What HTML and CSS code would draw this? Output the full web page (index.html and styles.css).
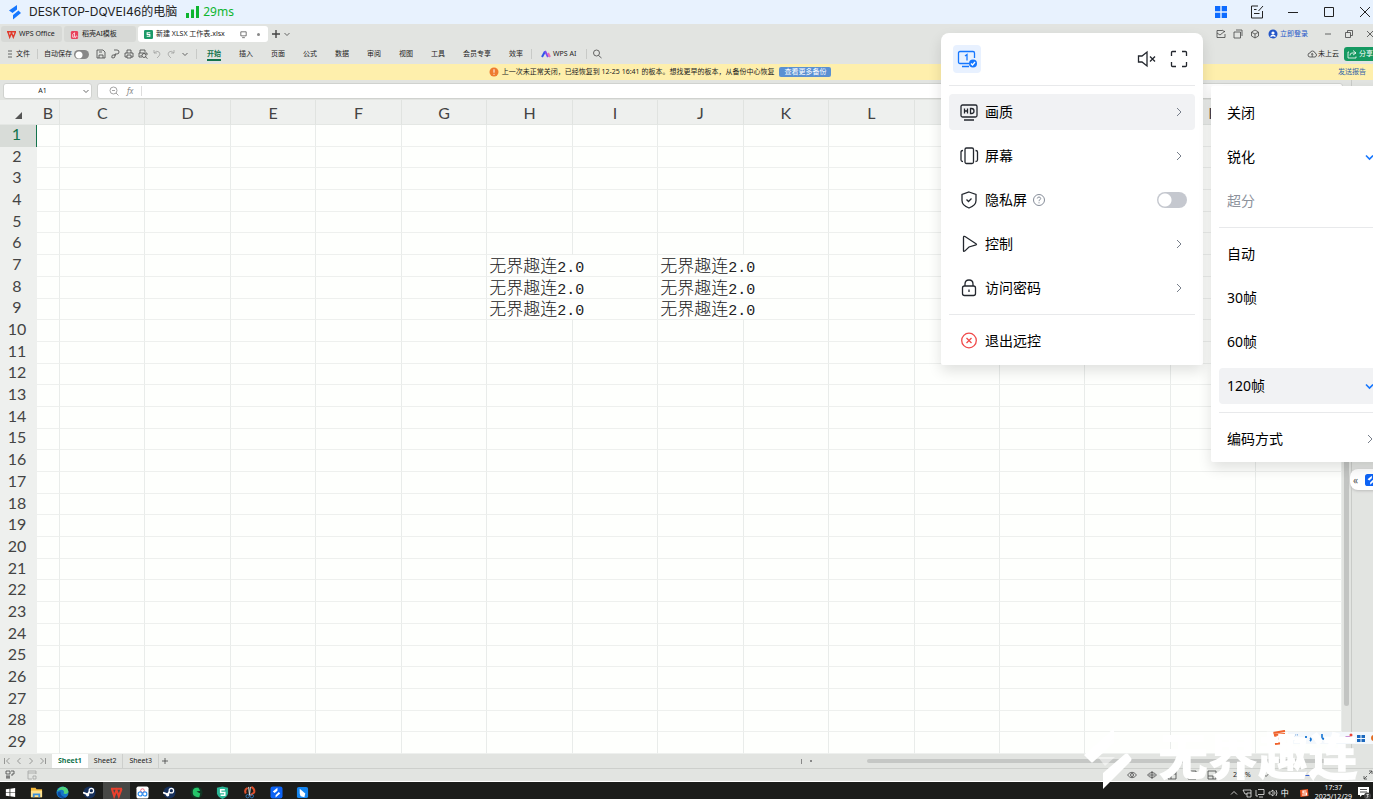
FILE: index.html
```html
<!DOCTYPE html>
<html lang="zh-CN">
<head>
    <meta charset="UTF-8">
    <meta name="viewport" content="width=device-width, initial-scale=1.0">
    <title>DESKTOP-DQVEI46的电脑</title>
    <link rel="stylesheet" href="styles.css">
</head>
<body>
    <svg class="defs">
        <symbol id="right" viewBox="0 0 10 10"><path d="M3 1l4 4-4 4"/></symbol>
        <symbol id="down" viewBox="0 0 10 10"><path d="M2.500 4l2.500 2.500L7.500 4"/></symbol>
        <symbol id="bolt" viewBox="0 0 14 16"><path d="M9 1v4.500L4.500 9 1 6.500zM10.500 6.500L13 9l-8 6.500V11z"/></symbol>
        <symbol id="steam" viewBox="0 0 14 14"><circle cx="7" cy="7" r="6.500" fill="#16305c"/><path d="M0 7l5 2 3-4" stroke="#fff" stroke-width="2" fill="none"/><circle cx="9" cy="5" r="2.400" fill="#16305c" stroke="#fff" stroke-width="1.300"/><circle cx="5" cy="9.500" r="1.800" fill="#fff"/></symbol>
    </svg>

    <header class="titlebar">
        <svg class="logo" viewBox="0 0 14 16"><use href="#bolt"/></svg>
        <h1>DESKTOP-DQVEI46的电脑</h1>
        <svg class="signal" viewBox="0 0 14 12"><path d="M0 7h3v5H0zM5 3.500h3V12H5zM10 0h3v12h-3z"/></svg>
        <span class="ping">29ms</span>
        <div class="win">
            <button aria-label="应用"><svg viewBox="0 0 14 14"><path class="blue" d="M1 1h5.300v5.300H1zM7.700 1H13v5.300H7.700zM1 7.700h5.300V13H1zM7.700 7.700H13V13H7.700z"/></svg></button>
            <button aria-label="记录"><svg viewBox="0 0 14 14"><path d="M8 1H1.500v12h11V6M4 4.500h2.500M4 8.500h5.500M8.500 6l4.500-5"/></svg></button>
            <button aria-label="最小化"><svg viewBox="0 0 14 14"><path d="M2 7.500h10"/></svg></button>
            <button aria-label="最大化"><svg viewBox="0 0 14 14"><path d="M2.500 2.500h9v9h-9z"/></svg></button>
            <button aria-label="关闭"><svg viewBox="0 0 14 14"><path d="M2 2l10 10M12 2L2 12"/></svg></button>
        </div>
    </header>

    <main class="remote">
        <div class="tabs">
            <button class="tab home"><svg viewBox="0 0 10 10"><path d="M0 2h10M1 2l2 6 2-5 2 5 2.500-6" stroke="#e03a2c" stroke-width="1.600"/></svg>WPS Office</button>
            <button class="tab tpl"><svg viewBox="0 0 10 10"><rect x="1" y="1" width="8" height="9" rx="1.500" fill="#e8435c"/><path d="M3 8V5l2-2v5zM6 9c0-3 2-3 2-1" stroke="#fff" stroke-width=".8"/></svg>稻壳AI模板</button>
            <button class="tab doc"><svg viewBox="0 0 10 10"><rect x="0" y="0" width="10" height="10" rx="1.500" fill="#1c9a68"/><path d="M7 3H3.500v2h3v2H3" stroke="#fff" stroke-width="1.200"/></svg>新建 XLSX 工作表.xlsx
                <svg class="screen" viewBox="0 0 10 10"><path d="M2 2h6v4.500H2zM3.500 8.500h3"/></svg><i class="dot"></i></button>
            <button class="add" aria-label="新建"><svg viewBox="0 0 10 10"><path d="M5 1v8M1 5h8" stroke-width="1.400"/></svg></button>
            <button aria-label="标签列表"><svg viewBox="0 0 10 10"><use href="#down"/></svg></button>
            <div class="account">
                <svg viewBox="0 0 10 10"><path d="M6 1.500H1v7h8V5M1 4l3 2 5-4M6 1l3 2"/></svg>
                <svg viewBox="0 0 10 10"><path d="M1 3h6.500v6H1zM3 1h6v6"/></svg>
                <svg viewBox="0 0 10 10"><path d="M5 1l3.500 2v4L5 9 1.500 7V3zM2 3.500l3 1.500 3-1.500M5 5v4"/></svg>
                <a href="#"><svg viewBox="0 0 10 10"><circle cx="5" cy="5" r="4.500" fill="#2456c8"/><circle cx="5" cy="4" r="1.600" fill="#fff"/><path d="M2.500 7.500q2.500-2 5 0" stroke="#fff" stroke-width="1.400"/></svg>立即登录</a>
            </div>
            <div class="docwin">
                <svg viewBox="0 0 10 10"><path d="M2 5h6"/></svg>
                <svg viewBox="0 0 10 10"><path d="M1.500 3.500h5v5h-5zM3.500 3.500v-2h5v5h-2"/></svg>
                <svg viewBox="0 0 10 10"><path d="M2 2l6 6M8 2L2 8"/></svg>
            </div>
        </div>

        <div class="ribbon">
            <button class="file"><svg viewBox="0 0 6 8"><path d="M1 1h4M1 4h4M1 7h4"/></svg>文件</button>
            <label class="autosave">自动保存<input type="checkbox" class="switch small"></label>
            <div class="quick">
                <svg viewBox="0 0 10 10"><path d="M1 1h6l2 2v6H1zM3 9V6h4v3M3 3h3"/></svg>
                <svg viewBox="0 0 10 10"><path d="M4 1h3q2 0 2 2t-2 2H5v2q0 2-2 2T2 7q0-1 1-1h3"/></svg>
                <svg viewBox="0 0 10 10"><path d="M3 4V1h4v3M3 8H1V4h8v4H7M3 6h4v3H3z"/></svg>
                <svg viewBox="0 0 10 10"><path d="M2 4V1h5v2M2 8H1V4h8v2M3 9V6"/><circle cx="6" cy="6.500" r="2"/><path d="M7.500 8l2 1.500"/></svg>
                <svg class="dim" viewBox="0 0 10 10"><path d="M2 1v3h3M2 4q3-3 5-1t0 4L5 9"/></svg>
                <svg class="dim" viewBox="0 0 10 10"><path d="M8 1v3H5M8 4Q5 1 3 3t0 4l2 2"/></svg>
                <svg viewBox="0 0 10 10"><use href="#down"/></svg>
            </div>
            <nav>
                <a class="on" href="#">开始</a><a href="#">插入</a><a href="#">页面</a><a href="#">公式</a><a href="#">数据</a><a href="#">审阅</a><a href="#">视图</a><a href="#">工具</a><a href="#">会员专享</a><a href="#">效率</a>
            </nav>
            <button class="ai"><svg viewBox="0 0 10 8"><path d="M1 7l3-5.500" stroke="#2f55e8" stroke-width="2"/><path d="M4 1l3 6" stroke="#7a4df0" stroke-width="2"/><path d="M7 3l2 4" stroke="#f06ab4" stroke-width="2"/></svg>WPS AI</button>
            <button class="find" aria-label="搜索"><svg viewBox="0 0 10 10"><circle cx="4.500" cy="4" r="3"/><path d="M6.500 6.500L9.500 9"/></svg></button>
            <span class="cloud"><svg viewBox="0 0 10 10"><path d="M3 8Q1 8 1 6t2-2q.5-2 2.500-2T8 4q1.500.5 1.500 2T8 8zM5.200 8V4.500M4 5.500l1.200-1 1.200 1"/></svg>未上云</span>
            <button class="share"><svg viewBox="0 0 10 10"><path d="M6 1.500L9 4 6 6M9 4H5Q3 4 3 6.500M2 3H1v6h8V7.500"/></svg>分享</button>
        </div>

        <div class="notice">
            <svg viewBox="0 0 10 10"><circle cx="5" cy="5" r="4.500" fill="#ee7b30"/><path d="M5 2.300v3.400M5 6.800v1" stroke="#fff" stroke-width="1"/></svg>
            <span>上一次未正常关闭，已经恢复到 12-25 16:41 的板本。想找更早的板本，从备份中心恢复</span>
            <button>查看更多备份</button>
            <a href="#">发送报告</a>
        </div>

        <div class="work">
            <div class="book">
                <div class="formula">
                    <label class="namebox"><input type="text" value="A1" aria-label="名称框"><svg viewBox="0 0 10 10"><use href="#down"/></svg></label>
                    <label class="fx"><svg viewBox="0 0 10 10"><circle cx="4.500" cy="4.500" r="3.500"/><path d="M3 4.500h3M7 7l2.500 2.500"/></svg><em>fx</em><input type="text" aria-label="编辑栏"></label>
                </div>
                <div class="sheet">
                    <table>
                        <colgroup><col class="c-num"><col class="c-b"></colgroup>
                        <thead><tr id="cols"><th><svg viewBox="0 0 8 8"><path d="M8 0v8H0z"/></svg></th></tr></thead>
                        <tbody id="rows"></tbody>
                    </table>
                    <div class="vscroll"><i></i></div>
                </div>
            </div>
            <aside class="side"></aside>
        </div>

        <div class="sheets">
            <div class="pager">
                <svg viewBox="0 0 10 10"><path d="M2.500 2v6M7.500 2l-3 3 3 3"/></svg>
                <svg viewBox="0 0 10 10"><path d="M6.500 2l-3 3 3 3"/></svg>
                <svg viewBox="0 0 10 10"><path d="M3.500 2l3 3-3 3"/></svg>
                <svg viewBox="0 0 10 10"><path d="M2.500 2l3 3-3 3M7.500 2v6"/></svg>
            </div>
            <button class="on">Sheet1</button><button>Sheet2</button><button>Sheet3</button>
            <button class="plus" aria-label="新建工作表"><svg viewBox="0 0 10 10"><path d="M5 2v6M2 5h6"/></svg></button>
            <div class="hscroll"><b></b><b class="pt"></b><i></i></div>
        </div>

        <div class="status">
            <svg viewBox="0 0 10 10"><path d="M1 1h4v3H1zM6 1h3v3H7v2M2 5v4M1 7h4M4 5v4"/></svg>
            <svg class="dim" viewBox="0 0 10 10"><path d="M9 4V1H1v8h4M1 3h8M6 6h3v3H6z"/></svg>
            <div class="views">
                <svg viewBox="0 0 10 10"><path d="M.5 5Q5-.5 9.500 5 5 10.500.5 5z"/><circle cx="5" cy="5" r="1.500"/></svg>
                <svg viewBox="0 0 10 10"><path d="M.5 5Q5 0 9.500 5 5 10 .5 5zM5 1v8M2 5h6"/></svg>
                <svg viewBox="0 0 10 10"><path d="M1 1h8v8H1zM1 4h8M4 1v8"/></svg>
                <svg viewBox="0 0 10 10"><path d="M1 1h8v8H1zM3 5h4"/></svg>
                <svg viewBox="0 0 10 10"><path d="M1 1h8v8H1zM1 6h5v3"/></svg>
            </div>
            <span class="zoom">222%</span>
            <svg viewBox="0 0 10 10"><use href="#down"/></svg>
            <i class="slider"></i>
            <svg class="full" viewBox="0 0 10 10"><path d="M6 1h3v3M9 1L6 4M4 9H1V6M1 9l3-3"/></svg>
        </div>
    </main>

    <footer class="taskbar">
        <button class="start" aria-label="开始"><svg viewBox="0 0 14 14"><path fill="#fff" d="M2 3.500l4-.5v3.600H2zM6.800 3L12 2.200v4.400H6.800zM2 7.400h4V11l-4-.5zM6.800 7.400H12v4.400L6.800 11z"/></svg></button>
        <div class="apps">
            <button aria-label="文件资源管理器"><svg viewBox="0 0 14 14"><path fill="#f5b93c" d="M1 2h5l1 1.500h6V12H1z"/><path fill="#ffe08a" d="M1 5h12v7H1z"/><path fill="#3a8fdc" d="M3 8h8v4H9v-2H5v2H3z"/></svg></button>
            <button aria-label="Edge"><svg viewBox="0 0 14 14"><circle cx="7" cy="7" r="6.500" fill="#1576c9"/><path fill="#4fd27e" d="M1 6Q3 .5 8 .7q5 .8 5.400 5.800Q12 9.500 8 8q2-3-2-4-3 0-5 2z"/><path fill="#0c4a9c" d="M5 6q-1 5 6 6-5 3-9-2-1-4 3-4z"/></svg></button>
            <button aria-label="Steam"><svg viewBox="0 0 14 14"><use href="#steam"/></svg></button>
            <button class="on" aria-label="WPS"><svg viewBox="0 0 14 14"><path d="M1 3h12M2 3l2.500 8L7 4.500 9.500 11 12.500 3" stroke="#e8402e" stroke-width="2.200"/></svg></button>
            <button aria-label="百度网盘"><svg viewBox="0 0 14 14"><rect x=".5" y=".5" width="13" height="13" rx="2" fill="#fff"/><circle cx="7" cy="5" r="2" stroke="#e8455c"/><circle cx="4.500" cy="8.500" r="2.200" stroke="#2a8cf0" stroke-width="1.200"/><circle cx="9.500" cy="8.500" r="2.200" stroke="#2a8cf0" stroke-width="1.200"/></svg></button>
            <button aria-label="Steam"><svg viewBox="0 0 14 14"><use href="#steam"/></svg></button>
            <button aria-label="加速器"><svg viewBox="0 0 14 14"><circle cx="7" cy="7" r="6.500" fill="#123524"/><path fill="#25c468" d="M3 5q1-4 6-3l2 3-4 1 4 2-1 4q-6 0-7-4z"/></svg></button>
            <button aria-label="安全卫士"><svg viewBox="0 0 14 14"><path fill="#2bb594" d="M1 2l6-1.500L13 2v6q-1 4-6 6-5-2-6-6z"/><path d="M9.500 4H5v3h4.500v3H5" stroke="#fff" stroke-width="1.600"/></svg></button>
            <button aria-label="截图"><svg viewBox="0 0 14 14"><path d="M9 1q4 2 3 6L8 10M5 2Q1 4 3 8" stroke="#e0502c" stroke-width="2.200"/><path d="M6 1l1 9M8 1L7 10" stroke="#ddd" stroke-width="1"/><circle cx="5" cy="11" r="1.800" stroke="#3a8ee0"/><circle cx="9.500" cy="11" r="1.800" stroke="#3a8ee0"/></svg></button>
            <button aria-label="无界趣连"><svg viewBox="0 0 14 14"><rect x=".5" y=".5" width="13" height="13" rx="2.500" fill="#0d63f5"/><path fill="#fff" d="M8 2v3L5 7.500 3 6zM9.500 6.500L11 8l-5 4.500V10z"/></svg></button>
            <button aria-label="远程"><svg viewBox="0 0 14 14"><rect x="1" y="1" width="12" height="12" rx="2" fill="#1585f0"/><path fill="#fff" d="M4 3l6 5-1 4-4-1-1-3z"/></svg></button>
        </div>
        <div class="tray">
            <svg viewBox="0 0 10 10"><path d="M2 6.500l3-3 3 3"/></svg>
            <svg viewBox="0 0 10 10"><path d="M1 2h8v3M1 2l2 4h2M5 5h4v4H5z"/></svg>
            <svg viewBox="0 0 10 10"><path d="M3 1.500h6v5H3M1 2v6h2M4 9h4"/></svg>
            <svg viewBox="0 0 10 10"><path d="M1 4v2h1.500L5 8V2L2.500 4zM6.500 3.500q1 1.500 0 3M8 2q2 3 0 6"/></svg>
            <span>中</span>
            <svg class="sogou" viewBox="0 0 10 10"><path fill="#ef5420" d="M1 2l8-1 .500 7-8 1z"/><path d="M7.500 3H4v2h3.500v2H3" stroke="#fff" stroke-width="1.200"/></svg>
            <time>17:37<br>2025/12/29</time>
            <svg class="note" viewBox="0 0 14 14"><path fill="#fff" d="M1 1h11v8H5l-2 2V9H1z"/><path d="M3 3.500h7M3 6h7" stroke="#222"/><circle cx="10.500" cy="10" r="3.500" fill="#444"/><path d="M9.500 8.500h2l-1 1.200q1.500 1-.8 1.800" stroke="#fff" stroke-width=".8"/></svg>
        </div>
    </footer>

    <div class="ime">
        <svg class="s" viewBox="0 0 16 16"><path d="M1 3l12-2M13 4L3 5l1 4 8-1-1 5-8 1" stroke="#f0622c" stroke-width="2.200"/></svg>
        <div class="tools">
            <svg viewBox="0 0 10 10"><path d="M7 2Q3 1 3 5t4 3" stroke="#2a78cf" stroke-dasharray="1 1"/></svg>
            <svg viewBox="0 0 10 10"><path d="M2 3v2M6 5q2 1 0 3" stroke="#1474d4" stroke-width="1.800"/></svg>
            <svg viewBox="0 0 10 10"><path d="M5 1v5M3 5q2 3 4 0M5 7v2" stroke="#1474d4" stroke-width="1.600"/></svg>
            <svg viewBox="0 0 10 10"><path d="M2 3h1M7 3v3" stroke="#1474d4"/></svg>
            <svg viewBox="0 0 10 10"><path d="M1 5l2-2h4l2 3z" fill="#b05fc4"/><circle cx="8" cy="2" r="1.500" fill="#ec4437"/></svg>
            <svg viewBox="0 0 10 10"><path d="M1 2h3.500v3H1zM5.500 2H9v3H5.500zM1 6h3.500v3H1zM5.500 6H9v3H5.500z" fill="#1b68be"/></svg>
            <svg viewBox="0 0 10 10"><circle cx="5" cy="5" r="3" fill="#e36b20"/></svg>
        </div>
    </div>

    <div class="mark">
        <svg viewBox="0 0 48 61"><path d="M30 0v15L9 34q-1 1-2 0L0 27zM41 26q2-1 3 0l3 4q1 1 0 3L19 61V45z"/><path class="fade" d="M14 29h17L21 38z"/></svg>
        <span>无界趣连</span>
    </div>

    <button class="handle" aria-label="展开">«<svg viewBox="0 0 14 14"><rect width="14" height="14" rx="3" fill="#0d63f5"/><path fill="#fff" d="M8 2v3L5 7.500 3 6zM9.500 6.500L11 8l-5 4.500V10z"/></svg></button>

    <div class="menu">
        <div class="top">
            <button class="monitor" aria-label="屏幕1"><svg viewBox="0 0 20 20"><path d="M12 14.500H3Q1.500 14.500 1.500 13V4Q1.500 2.500 3 2.500h13q1.500 0 1.500 1.500v5M5 17.500h7M8 7l2-1.500V11.500"/><circle cx="16" cy="14.500" r="4" fill="#1677ff" stroke="none"/><path class="ok" d="M14 14.500l1.500 1.500 2.500-3"/></svg></button>
            <button aria-label="静音"><svg viewBox="0 0 20 20"><path d="M1.500 7v6H5l5 4V3L5 7zM13 7.500l5 5M18 7.500l-5 5"/></svg></button>
            <button aria-label="全屏"><svg viewBox="0 0 20 20"><path d="M2.500 7V3.500q0-1 1-1H7M13 2.500h3.500q1 0 1 1V7M17.500 13v3.500q0 1-1 1H13M7 17.500H3.500q-1 0-1-1V13"/></svg></button>
        </div>
        <hr>
        <button class="item on"><svg viewBox="0 0 20 20"><rect x="2" y="3" width="16" height="12" rx="1.500"/><path d="M5 18h10M5.500 6.500v5M5.500 9h3M8.500 6.500v5M11.500 6.500v5h1q2.500 0 2.500-2.500t-2.500-2.500z"/></svg>画质<svg class="more" viewBox="0 0 10 10"><use href="#right"/></svg></button>
        <button class="item"><svg viewBox="0 0 20 20"><rect x="6" y="2" width="8.500" height="15.500" rx="1.500"/><path d="M4 4.500q-2 0-2 1.500v8q0 1.500 2 1.500M16.500 4.500q2 0 2 1.500v8q0 1.500-2 1.500"/></svg>屏幕<svg class="more" viewBox="0 0 10 10"><use href="#right"/></svg></button>
        <label class="item"><svg viewBox="0 0 20 20"><path d="M10 2l7 2.500v6q0 5-7 7.500-7-2.500-7-7.500v-6zM7.500 9.500l2 2L12.500 8.500"/></svg>隐私屏<svg class="help" viewBox="0 0 14 14"><circle cx="7" cy="7" r="5.500"/><path d="M5.300 5.500Q5.500 4 7 4t1.700 1.500Q8.700 6.500 7 7.500v.7M7 9.300v1"/></svg><input type="checkbox" class="switch"></label>
        <button class="item"><svg viewBox="0 0 20 20"><path d="M4.500 3.500v13q0 1.500 1.200.6L10 13l7-2.200q1-.500 0-1.100L6 2.500q-1.500-.7-1.500 1z"/></svg>控制<svg class="more" viewBox="0 0 10 10"><use href="#right"/></svg></button>
        <button class="item"><svg viewBox="0 0 20 20"><rect x="3.500" y="8" width="13" height="9.500" rx="2"/><path d="M6 8V6q0-4 4-4t4 4v2M10 11.500v2.500"/></svg>访问密码<svg class="more" viewBox="0 0 10 10"><use href="#right"/></svg></button>
        <hr>
        <button class="item quit"><svg viewBox="0 0 20 20"><circle cx="10" cy="9.500" r="7.300"/><path d="M7.500 7l5 5M12.500 7l-5 5"/></svg>退出远控</button>
    </div>

    <div class="menu sub">
        <button class="item">关闭</button>
        <button class="item">锐化<svg class="tick" viewBox="0 0 10 10"><path d="M1 3.500l3.500 3.500L8 3.500"/></svg></button>
        <button class="item" disabled>超分</button>
        <hr>
        <button class="item">自动</button>
        <button class="item">30帧</button>
        <button class="item">60帧</button>
        <button class="item on">120帧<svg class="tick" viewBox="0 0 10 10"><path d="M1 3.500l3.500 3.500L8 3.500"/></svg></button>
        <hr>
        <button class="item">编码方式<svg class="more" viewBox="0 0 10 10"><use href="#right"/></svg></button>
    </div>

    <script>
    var letters = 'BCDEFGHIJKLMNOPQ'.split('');
    var cols = document.getElementById('cols');
    var rows = document.getElementById('rows');
    for(var i = 0; i < letters.length; i++){
        var th = document.createElement('th');
        th.textContent = letters[i];
        cols.appendChild(th);
    }
    for(var r = 1; r <= 29; r++){
        var tr = document.createElement('tr');
        var html = '<th' + (r == 1 ? ' class="active"' : '') + '>' + r + '</th>';
        for(var c = 0; c < letters.length; c++){
            if(r >= 7 && r <= 9 && (letters[c] == 'H' || letters[c] == 'J')){
                html += '<td class="filled">无界趣连<span>2.0</span></td>';
            }else{
                html += '<td></td>';
            }
        }
        tr.innerHTML = html;
        rows.appendChild(tr);
    }
    </script>
</body>
</html>
```
FILE: styles.css
```css
*{
    margin: 0;
    padding: 0;
    box-sizing: border-box;
}
body{
    position: relative;
    display: flex;
    flex-direction: column;
    height: 100vh;
    overflow: hidden;
    font-family: "Noto Sans", "Noto Sans CJK SC", sans-serif;
    font-size: 7px;
    line-height: 10px;
    color: #222;
    background-color: #e2e4e1;
}
button,input{
    font: inherit;
    color: inherit;
    border: 0;
    background: none;
}
a{
    color: inherit;
    text-decoration: none;
}
svg{
    flex: none;
    width: 10px;
    height: 10px;
    fill: none;
    stroke: #444;
    stroke-width: 0.8;
}
svg [fill]:not([stroke]){
    stroke: none;
}
button{
    display: flex;
    align-items: center;
    flex: none;
    white-space: nowrap;
}
.defs{
    position: absolute;
    width: 0;
    height: 0;
}

/* 标题栏 */
.titlebar{
    display: flex;
    align-items: center;
    flex: none;
    height: 24px;
    padding: 0 1px 0 8px;
    background-color: #e8f2fe;
}
.titlebar .logo{
    width: 14px;
    height: 16px;
    fill: #1677ff;
    stroke: none;
}
.titlebar h1{
    margin: 0 9px 0 7px;
    font-family: Inter, "Noto Sans CJK SC", sans-serif;
    font-size: 12px;
    font-weight: normal;
    line-height: 24px;
}
.titlebar .signal{
    width: 14px;
    height: 12px;
    fill: #0db52f;
    stroke: none;
}
.ping{
    margin-left: 3px;
    font-size: 12px;
    color: #0db52f;
}
.win{
    display: flex;
    gap: 22px;
    margin-left: auto;
}
.win svg{
    width: 14px;
    height: 14px;
    stroke: #222;
    stroke-width: 1;
}
.win .blue{
    fill: #0d6bff;
    stroke: none;
}

/* 文档标签 */
.remote{
    display: flex;
    flex-direction: column;
    flex: 1;
    min-height: 0;
}
.tabs{
    display: flex;
    align-items: center;
    flex: none;
    height: 20px;
    padding-left: 1px;
}
.tab{
    gap: 3px;
    height: 16px;
    margin-right: 2px;
    padding: 0 6px;
    border-radius: 3px;
    background-color: #d7d9d6;
}
.tab.home{
    width: 61px;
}
.tab.tpl{
    width: 72px;
}
.tab.doc{
    width: 130px;
    padding: 0 8px 0 6px;
    background-color: #fff;
}
.tab svg{
    width: 9px;
    height: 9px;
}
.tab .screen{
    margin-left: auto;
}
.dot{
    width: 3px;
    height: 3px;
    margin-left: 6px;
    border-radius: 50%;
    background-color: #888;
}
.tabs .add{
    margin: 0 1px 0 1px;
}
.account{
    display: flex;
    gap: 7px;
    margin: 0 15px 0 auto;
}
.account a{
    display: flex;
    gap: 2px;
    margin-left: 1px;
    color: #2456c8;
}
.docwin{
    display: flex;
    gap: 11px;
    margin-right: -2px;
}

/* 功能区 */
.ribbon{
    display: flex;
    align-items: center;
    flex: none;
    height: 20px;
    padding-left: 7px;
}
.file{
    gap: 3px;
    padding-right: 7px;
    border-right: 1px solid #c8cac7;
}
.file svg{
    width: 6px;
    height: 8px;
}
.autosave{
    display: flex;
    align-items: center;
    gap: 2px;
    margin-left: 6px;
}
.quick{
    display: flex;
    gap: 4px;
    margin-left: 7px;
    padding-right: 6px;
    border-right: 1px solid #c8cac7;
}
.quick .dim,.status .dim{
    opacity: 0.4;
}
.ribbon nav{
    display: flex;
    gap: 18px;
    padding: 0 8px 0 10px;
    border-right: 1px solid #c8cac7;
}
.ribbon .on{
    font-weight: bold;
    color: #13734c;
    box-shadow: 0 2px #13734c;
}
.ai{
    gap: 2px;
    padding: 0 10px 0 9px;
    border-right: 1px solid #c8cac7;
}
.find{
    margin-left: 5px;
}
.cloud{
    display: flex;
    gap: 1px;
    margin: 0 5px 0 auto;
}
.share{
    height: 14px;
    gap: 2px;
    padding: 0 0 0 3px;
    border-radius: 3px 0 0 3px;
    color: #fff;
    background-color: #159961;
}
.share svg{
    stroke: #fff;
}

.notice{
    display: flex;
    align-items: center;
    flex: none;
    height: 16px;
    padding: 0 7px 0 35.6%;
    background-color: #feefac;
}
.notice span{
    margin: 0 5px 0 3px;
    white-space: nowrap;
}
.notice button{
    height: 10px;
    padding: 0 5px;
    border-radius: 2px;
    color: #fff;
    background-color: #5a90d2;
}
.notice a{
    margin-left: auto;
    color: #3264a8;
}

/* 表格 */
.work{
    display: flex;
    flex: 1;
    min-height: 0;
}
.book{
    display: flex;
    flex-direction: column;
    flex: 1;
    min-width: 0;
}
.side{
    flex: none;
    width: 22px;
    border-left: 1px solid #c9cbc8;
    background-color: #e2e4e1;
}
.formula{
    display: flex;
    gap: 5px;
    flex: none;
    height: 20px;
    padding: 3px 8px 1px 3px;
}
.namebox,.fx{
    display: flex;
    align-items: center;
    border: 1px solid #d0d2cf;
    border-radius: 3px;
    background-color: #fff;
}
.namebox{
    width: 89px;
}
.namebox input{
    width: 77px;
    text-align: center;
}
.fx{
    flex: 1;
    gap: 8px;
    padding-left: 11px;
}
.fx svg{
    opacity: 0.6;
}
.fx em{
    padding-right: 8px;
    border-right: 1px solid #ddd;
    font-size: 8px;
    color: #888;
}
.fx input{
    flex: 1;
}
.sheet{
    display: flex;
    flex: 1;
    min-height: 0;
}
.sheet table{
    flex: 1;
    width: 100%;
    height: 100%;
    table-layout: fixed;
    border-collapse: separate;
    border-spacing: 0;
    font-size: 16px;
    line-height: 16px;
    background-color: #fefffd;
}
.c-num{
    width: 37px;
}
.c-b{
    width: 23px;
}
.sheet th{
    font-family: Lato, sans-serif;
    font-weight: normal;
    color: #444;
    background-color: #eef0ee;
}
.sheet thead th{
    height: 25px;
    padding-top: 2px;
    border-right: 1px solid #e0e3e0;
    border-bottom: 1px solid #e4e7e4;
}
.sheet thead th:first-child{
    border-right: 0;
}
.sheet th svg{
    width: 7px;
    height: 7px;
    fill: #555;
    stroke: none;
}
.sheet tbody th{
    padding: 0 3px 4px 0;
}
.sheet .active{
    color: #13734c;
    background-color: #d8dcd8;
    border-right: 1px solid #13734c;
}
.sheet td{
    border-right: 1px solid #e9ecea;
    border-bottom: 1px solid #eef0ee;
}
.sheet .filled{
    padding: 5px 0 0 2px;
    border-right: 0;
    font-family: "Liberation Serif", "Noto Sans CJK SC", serif;
    font-size: 17px;
    font-weight: 300;
    line-height: 10px;
    white-space: nowrap;
}
.filled span{
    font-family: "Liberation Mono", monospace;
    font-size: 15px;
}
.vscroll{
    width: 9px;
    padding: 2px 2px 48px;
}
.vscroll i{
    display: block;
    height: 100%;
    border-radius: 3px;
    background-color: #c2c4c2;
}

.sheets{
    display: flex;
    align-items: center;
    flex: none;
    height: 15px;
    border-bottom: 1px solid #cdcfcc;
}
.pager{
    display: flex;
    gap: 2px;
    margin: 0 4px 0 2px;
    opacity: 0.6;
}
.sheets button{
    height: 14px;
    padding: 0 6px;
    border-right: 1px solid #cdcfcc;
}
.sheets .on{
    border: 0;
    font-weight: bold;
    color: #13734c;
    background-color: #fff;
}
.sheets .plus{
    padding: 0 1px;
    border: 0;
}
.hscroll{
    display: flex;
    align-items: center;
    width: 39.5%;
    margin: 0 30px 0 auto;
}
.hscroll b{
    width: 1px;
    height: 5px;
    background-color: #888;
}
.hscroll .pt{
    width: 2px;
    height: 2px;
    margin: 0 55px 0 8px;
}
.hscroll i{
    flex: 1;
    height: 4px;
    border-radius: 2px;
    background-color: #c5c7c5;
}
.status{
    display: flex;
    align-items: center;
    flex: none;
    gap: 12px;
    height: 13px;
    padding: 0 0 0 5px;
    border-bottom: 1px solid #fff;
}
.views{
    display: flex;
    gap: 10px;
    margin: 0 4px 0 auto;
}
.status .zoom{
    width: 16px;
}
.slider{
    width: 30px;
    height: 1px;
    background-color: #3b62d0;
}
.status .full{
    margin-left: 38px;
}

/* 任务栏 */
.taskbar{
    display: flex;
    align-items: center;
    flex: none;
    height: 17px;
    overflow: hidden;
    color: #fff;
    background-color: #1c1d1b;
}
.taskbar svg{
    width: 13px;
    height: 13px;
}
.taskbar button{
    justify-content: center;
    height: 20px;
    padding-top: 4px;
}
.taskbar .start{
    width: 23px;
    padding-right: 3px;
}
.apps{
    display: flex;
    width: 293px;
}
.apps button{
    flex: 1;
}
.apps .on{
    background-color: #474846;
}
.tray{
    display: flex;
    align-items: center;
    gap: 3px;
    height: 17px;
    margin-left: auto;
    padding-right: 2px;
}
.tray svg,.tray span{
    flex: none;
    width: 10px;
    height: 10px;
    margin-top: 4px;
    stroke: #eee;
}
.tray .sogou{
    margin: 4px 0 0 5px;
}
.tray span{
    font-size: 8px;
}
.tray time{
    align-self: flex-start;
    margin: 1px 2px 0 3px;
    line-height: 9px;
    text-align: center;
}
.tray .note{
    width: 14px;
    height: 14px;
}

/* 浮层 */
.ime{
    position: absolute;
    right: 0;
    bottom: 53px;
    display: flex;
    align-items: center;
    width: 101px;
}
.ime .s{
    width: 16px;
    height: 16px;
}
.tools{
    display: flex;
    gap: 3px;
    margin-right: -3px;
    padding: 1px 0 1px 3px;
    background-color: #f4f8fc;
}
.mark{
    position: absolute;
    right: 15px;
    bottom: 10px;
    display: flex;
    align-items: flex-start;
    gap: 26px;
    font-family: "Noto Sans CJK SC", sans-serif;
    font-size: 50px;
    font-weight: 900;
    line-height: 50px;
    color: #fff;
}
.mark svg{
    width: 48px;
    height: 61px;
    fill: #fff;
    stroke: none;
}
.mark .fade{
    opacity: 0.5;
}
.handle{
    position: absolute;
    top: 469px;
    right: -4px;
    gap: 7px;
    height: 21px;
    padding: 0 0 0 3px;
    border-radius: 8px 0 0 8px;
    font-size: 10px;
    color: #555;
    background-color: #fff;
    box-shadow: 0 1px 3px #bbb;
}
.handle svg{
    width: 12px;
    height: 12px;
}

/* 远控菜单 */
.menu{
    position: absolute;
    top: 33px;
    right: 170px;
    width: 262px;
    padding: 0 8px 6px;
    border-radius: 8px 8px 2px 2px;
    background-color: #fff;
    box-shadow: 0 6px 14px rgba(0, 0, 0, 0.12);
    font-size: 14px;
    line-height: 20px;
    color: #000;
}
.menu svg{
    width: 20px;
    height: 20px;
    stroke: #23272e;
    stroke-width: 1.3;
}
.menu hr{
    height: 1px;
    margin: 8px 0;
    border: 0;
    background-color: #e8e9eb;
}
.top{
    display: flex;
    align-items: center;
    gap: 12px;
    height: 52px;
    padding: 0 6px 0 4px;
}
.top + hr{
    margin-top: 0;
}
.monitor{
    justify-content: center;
    width: 28px;
    height: 28px;
    margin-right: auto;
    border-radius: 4px;
    background-color: #e8f1ff;
}
.menu .monitor svg{
    stroke: #1677ff;
}
.monitor .ok{
    stroke: #fff;
}
.item{
    display: flex;
    align-items: center;
    gap: 6px;
    width: 100%;
    height: 36px;
    margin-bottom: 8px;
    padding: 0 11px 0 10px;
    border-radius: 4px;
}
.item:last-child{
    margin-bottom: 0;
}
.item.on{
    background-color: #f1f2f4;
}
.item .more,.item .tick{
    width: 10px;
    height: 10px;
    margin-left: auto;
    stroke: #777e8a;
    stroke-width: 1;
}
.item .tick{
    stroke: #1677ff;
    stroke-width: 1.6;
}
.item .help{
    width: 14px;
    height: 14px;
    margin-left: -1px;
    stroke: #868d99;
    stroke-width: 1;
}
.item.quit svg{
    stroke: #f04a4a;
}
.item:disabled{
    color: #8d929c;
}
.menu.sub{
    top: 86px;
    right: -16px;
    width: 178px;
    padding: 9px 8px 5px;
    border-radius: 2px;
}
.sub .item{
    padding: 0 6px 0 8px;
}

.switch{
    appearance: none;
    flex: none;
    width: 30px;
    height: 16px;
    margin-left: auto;
    border-radius: 8px;
    background: radial-gradient(circle at 8px 8px, #fff 6px, #c5c8cf 7px);
}
label.item{
    padding-right: 8px;
}
.switch.small{
    width: 15px;
    height: 9px;
    margin-left: 0;
    background: radial-gradient(circle at 5px 5px, #fff 3px, #888 4px);
}
```
